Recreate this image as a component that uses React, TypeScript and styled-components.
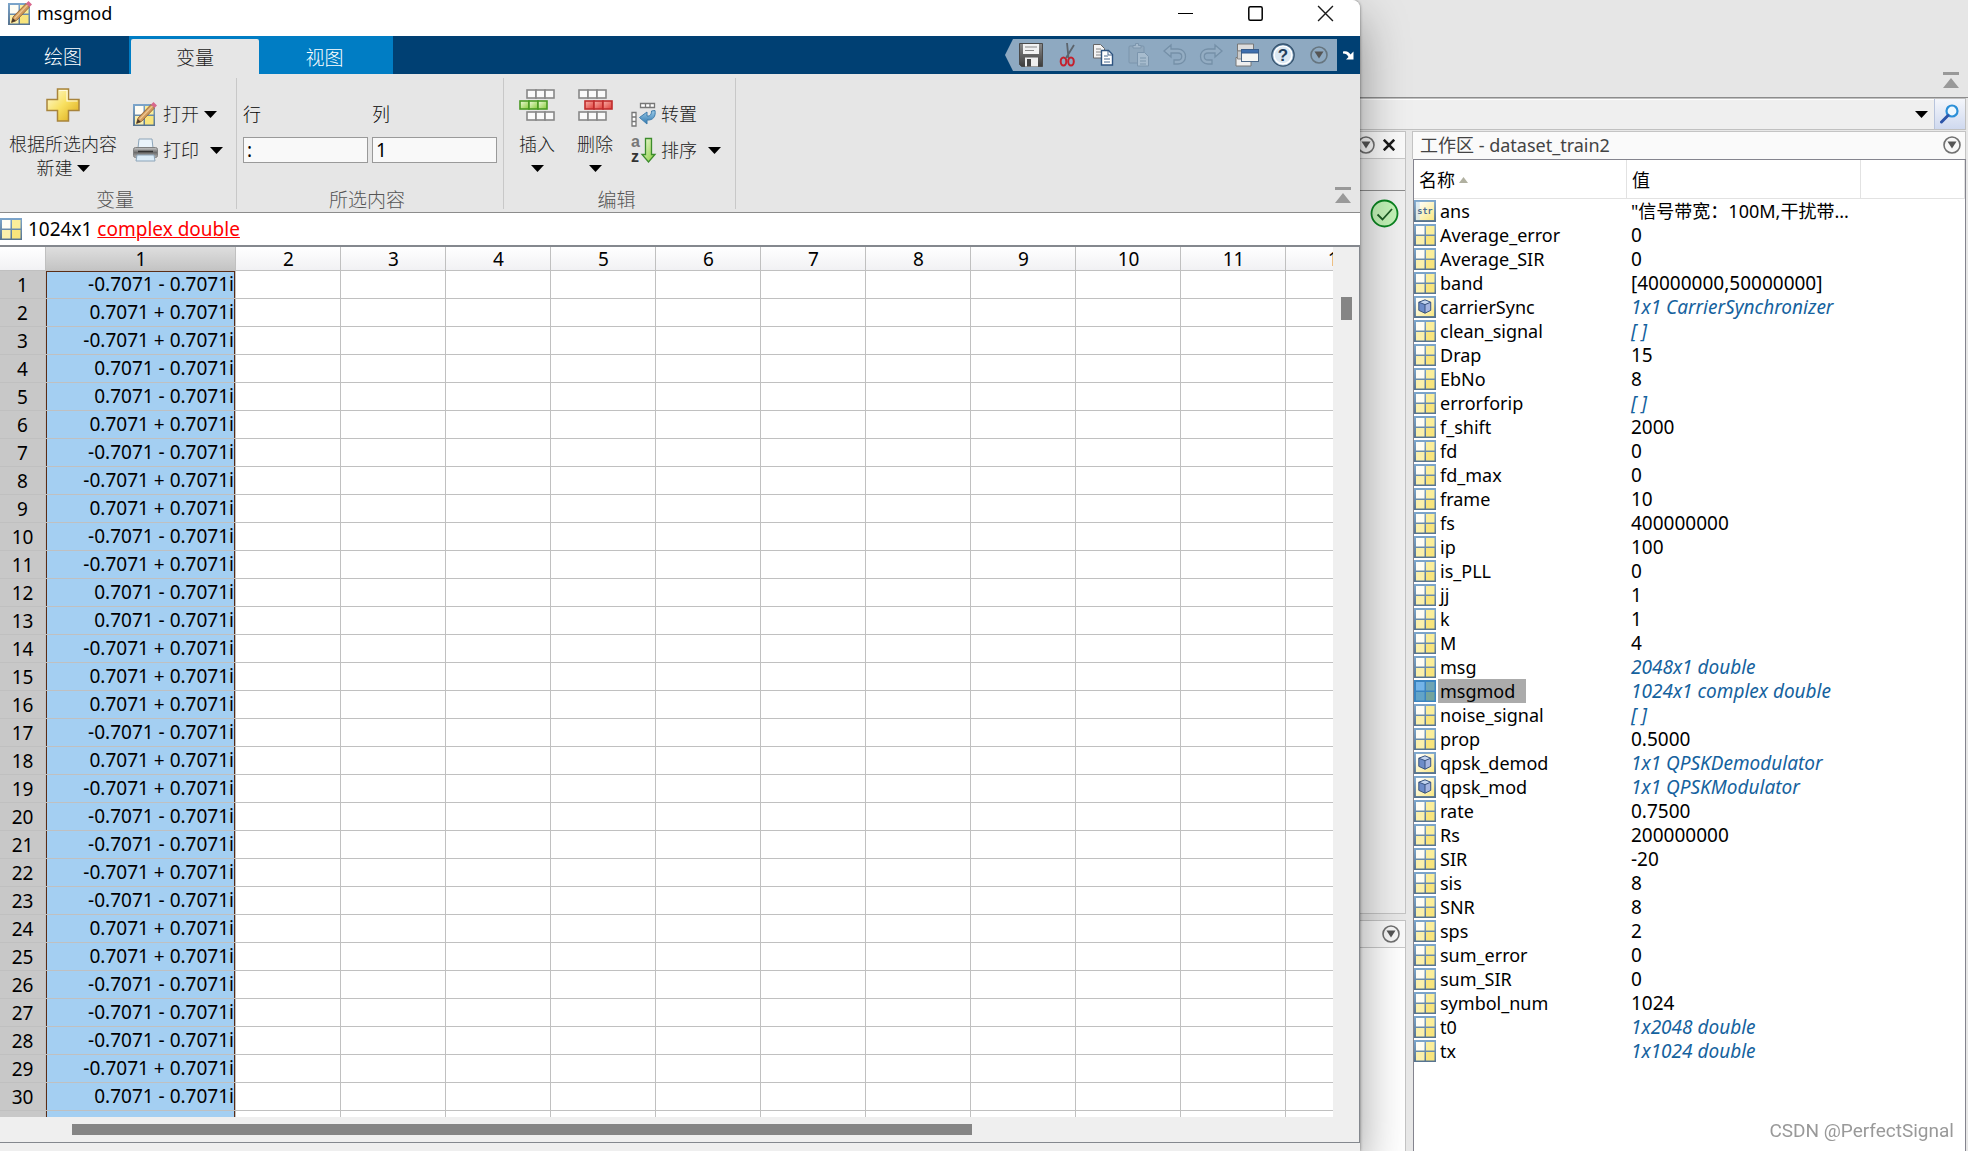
import React from "react";
import styled, { createGlobalStyle, css } from "styled-components";

const GlobalStyle = createGlobalStyle`
  * { box-sizing: border-box; }
  body {
    margin: 0;
    background: #e8e8e8;
    color: #000;
    font-family: "Noto Sans", "Noto Sans CJK SC", sans-serif;
    font-size: 19px;
    line-height: 24px;
  }
  button, input { font: inherit; color: inherit; }
  button { border: 0; padding: 0; margin: 0; background: none; }
  svg { display: block; flex: none; }
`;

const Desktop = styled.main`
  display: flex;
  height: 100vh;
  overflow: hidden;
`;

/* ---------- Variable editor window ---------- */

const EditorWindow = styled.section`
  display: flex;
  flex-direction: column;
  flex: 1;
  min-width: 0;
  z-index: 1;
  background: #efefef;
  border-radius: 0 8px 0 0;
  box-shadow: 0 0 3px rgba(0, 0, 0, 0.5), 0 20px 48px rgba(0, 0, 0, 0.4);
`;

const TitleBar = styled.header`
  display: flex;
  align-items: center;
  height: 36px;
  padding: 0 0 10px 8px;
  gap: 4px;
  background: #fff;
  border-radius: 0 8px 0 0;
`;

const WindowTitle = styled.h1`
  flex: 1;
  margin: 0;
  font-size: 18px;
  font-weight: 400;
`;

const WindowButtons = styled.div`
  display: flex;
`;

const WindowButton = styled.button`
  display: flex;
  align-items: center;
  justify-content: center;
  width: 70px;
  height: 26px;
`;

const TabStrip = styled.nav`
  display: flex;
  height: 38px;
  background: #004073;
`;

const TabGroup = styled.div`
  display: flex;
  padding: 3px 0 0 2px;
  background: #007dc4;
`;

const Tab = styled.button<{ $active?: boolean; $width: number }>`
  width: ${(p) => p.$width}px;
  padding: 3px 3px 0 0;
  color: #fff;
  font-weight: 300;
  ${(p) =>
    p.$active &&
    css`
      padding-right: 0;
      color: #222;
      background: #e6e6e6;
      border-radius: 2px 2px 0 0;
    `}
`;

const QuickBar = styled.div`
  display: flex;
  margin: 3px 0 3px auto;
  padding-left: 8px;
  background: #8ea9c1;
  clip-path: polygon(0 50%, 8px 0, 100% 0, 100% 100%, 8px 100%);
`;

const QuickButton = styled.button`
  display: flex;
  align-items: center;
  justify-content: center;
  width: 36px;
`;

const UndockButton = styled(QuickButton)`
  width: 23px;
`;

const Ribbon = styled.div`
  display: flex;
  height: 139px;
  padding: 4px 0 3px;
  background: #e6e6e6;
  border-bottom: 1px solid #8c8c8c;
`;

const RibbonSection = styled.section<{ $width: number }>`
  display: flex;
  flex-direction: column;
  width: ${(p) => p.$width}px;
  border-right: 1px solid #c8c8c8;
`;

const SectionBody = styled.div<{ $inset?: number }>`
  display: flex;
  flex: 1;
  padding-left: ${(p) => p.$inset ?? 0}px;
`;

const SectionLabel = styled.h2`
  margin: 0;
  padding-right: 6px;
  font-size: 19px;
  line-height: 18px;
  font-weight: 300;
  text-align: center;
  color: #555;
`;

const BigButton = styled.button<{ $width: number }>`
  display: flex;
  flex-direction: column;
  align-items: center;
  width: ${(p) => p.$width}px;
  padding-top: 10px;
  color: #222;
  font-size: 18px;
  font-weight: 300;
`;

const BigIcon = styled.span`
  display: block;
  height: 44px;
`;

const ButtonLine = styled.span`
  display: flex;
  align-items: center;
  justify-content: center;
  gap: 4px;
  height: 24px;
  white-space: nowrap;
`;

const SmallStack = styled.div`
  display: flex;
  flex-direction: column;
  padding: 18px 0 0 7px;
`;

const SmallButton = styled.button<{ $gap: number }>`
  display: flex;
  align-items: center;
  height: 36px;
  color: #222;
  font-size: 18px;
  font-weight: 300;
  white-space: nowrap;
  > svg:first-child { margin-right: 5px; }
  > svg:last-child:not(:first-child) { margin-left: ${(p) => p.$gap}px; }
`;

const FieldRow = styled.div`
  display: grid;
  grid-template-columns: 125px 125px;
  gap: 4px;
  padding-top: 24px;
`;

const Field = styled.label`
  display: flex;
  flex-direction: column;
  gap: 11px;
  font-size: 18px;
  font-weight: 300;
`;

const FieldInput = styled.input`
  width: 100%;
  height: 26px;
  padding: 0 3px;
  border: 1px solid #9a9a9a;
  background: #f9f9f9;
  font-size: 19px;
  font-weight: 400;
  outline: 0;
`;

const CollapseButton = styled.button`
  align-self: flex-end;
  margin-left: auto;
  padding: 0 9px 6px;
`;

const InfoBar = styled.div`
  display: flex;
  align-items: center;
  gap: 6px;
  height: 32px;
  background: #fff;
`;

const TypeLink = styled.a`
  color: #f00;
  text-decoration: underline;
  text-decoration-thickness: 1px;
`;

const GridFrame = styled.div`
  display: grid;
  grid-template-columns: minmax(0, 1fr) 26px;
  grid-template-rows: minmax(0, 1fr) 25px;
  flex: 1;
  min-height: 0;
  margin-bottom: 8px;
  border: solid #84888e;
  border-width: 2px 1px 1px 0;
`;

const GridViewport = styled.div`
  overflow: hidden;
`;

const VerticalTrack = styled.div`
  padding: 50px 0 0 8px;
`;

const VerticalThumb = styled.div`
  width: 11px;
  height: 23px;
  background: #858585;
`;

const HorizontalTrack = styled.div`
  display: grid;
  grid-column: 1 / -1;
  grid-template-columns: 900fr 387fr;
  padding: 7px 0 0 72px;
`;

const HorizontalThumb = styled.div`
  height: 11px;
  background: #858585;
`;

const DataGrid = styled.table`
  width: 1391px;
  table-layout: fixed;
  border-collapse: separate;
  border-spacing: 0;
  background: #fff;
  th, td {
    height: 28px;
    padding: 0;
    border: solid #c0c0c0;
    border-width: 0 1px 1px 0;
    font-weight: 400;
    line-height: 22px;
    white-space: pre;
  }
`;

const ColumnHead = styled.th<{ $selected?: boolean }>`
  && { height: 24px; padding-left: 1px; }
  background: ${(p) =>
    p.$selected ? "linear-gradient(#dedede, #c4c4c4)" : "linear-gradient(#fff, #f1f1f4)"};
`;

const RowHead = styled.th`
  background: #c8c8c8;
`;

const ValueCell = styled.td<{ $first: boolean }>`
  text-align: right;
  background: #a4cff2;
  box-shadow: inset 1px 0 #5a2d16, inset -1px 0 #5a2d16${(p) => (p.$first ? ", inset 0 1px #5a2d16" : "")};
  && { padding-right: 1px; vertical-align: top; line-height: 27px; }
`;

/* ---------- Main window behind the editor ---------- */

const Backdrop = styled.section`
  display: flex;
  flex-direction: column;
  width: 608px;
  background: #e8e8e8;
`;

const RibbonStub = styled.div`
  display: flex;
  height: 98px;
  padding-bottom: 3px;
  background: #e6e6e6;
  border-bottom: 1px solid #8c8c8c;
`;

const AddressBar = styled.div`
  display: flex;
  justify-content: flex-end;
  height: 32px;
  margin-right: 2px;
  background: #efefef;
  border: solid #c0c0c0;
  border-width: 1px 1px 1px 0;
  box-shadow: inset 0 1px #fff;
`;

const AddressMenu = styled.button`
  padding: 0 6px;
`;

const SearchButton = styled.button`
  display: flex;
  align-items: center;
  justify-content: center;
  width: 31px;
  border-left: 1px solid #b8c4dc;
  background: linear-gradient(#f4f6fb, #cfd9ef);
`;

const Panels = styled.div`
  display: flex;
  gap: 6px;
  flex: 1;
  min-height: 0;
  padding: 1px 2px 0 0;
`;

const SideColumn = styled.div`
  display: flex;
  flex-direction: column;
  gap: 6px;
  width: 46px;
`;

const SidePanel = styled.div<{ $height?: number }>`
  display: flex;
  flex-direction: column;
  ${(p) => (p.$height ? `height: ${p.$height}px;` : "flex: 1;")}
  border: solid #c4c4c4;
  border-width: 1px 1px ${(p) => (p.$height ? 0 : 1)}px 0;
  background: ${(p) => (p.$height ? "#fff" : "#f0f0f0")};
`;

const SideHeader = styled.div<{ $right: number }>`
  display: flex;
  align-items: center;
  justify-content: flex-end;
  gap: 8px;
  height: 27px;
  padding-right: ${(p) => p.$right}px;
  border-bottom: 1px solid #c8c8c8;
  background: #fafafa;
`;

const SideTabs = styled.div`
  height: 32px;
  border-bottom: 1px solid #8c8c8c;
`;

const StatusMark = styled.div`
  align-self: flex-end;
  padding: 8px 6px;
`;

const Workspace = styled.section`
  display: flex;
  flex-direction: column;
  flex: 1;
  min-width: 0;
`;

const WorkspaceHeader = styled.div`
  display: flex;
  align-items: center;
  justify-content: space-between;
  height: 28px;
  padding: 0 4px 2px 7px;
  border: solid #c4c4c4;
  border-width: 1px 1px 0 1px;
  background: #fafafa;
`;

const WorkspaceTitle = styled.h2`
  margin: 0;
  font-size: 18px;
  font-weight: 400;
  color: #444;
`;

const WorkspaceBody = styled.div`
  flex: 1;
  min-height: 0;
  overflow: hidden;
  background: #fff;
  border: solid #84848e;
  border-width: 1px 1px 0 1px;
  margin-left: 1px;
`;

const VariableTable = styled.table`
  width: 100%;
  table-layout: fixed;
  border-collapse: separate;
  border-spacing: 0;
  th {
    height: 39px;
    padding: 2px 5px 0;
    border: solid #e2e2e2;
    border-width: 0 1px 1px 0;
    font-size: 18px;
    font-weight: 400;
    text-align: left;
  }
  td {
    height: 24px;
    padding: 0;
    line-height: 24px;
    white-space: nowrap;
  }
`;

const HeadLabel = styled.span`
  display: flex;
  align-items: center;
  gap: 4px;
`;

const NameCell = styled.div`
  display: flex;
  align-items: center;
  gap: 2px;
  height: 24px;
`;

const VariableName = styled.span<{ $selected?: boolean }>`
  padding: 0 11px 0 2px;
  font-size: 18px;
  background: ${(p) => (p.$selected ? "#ababab" : "none")};
`;

const VariableValue = styled.td<{ $summary?: boolean; $text?: boolean }>`
  && { padding-left: 4px; }
  font-size: ${(p) => (p.$text ? 18 : 19)}px;
  ${(p) =>
    p.$summary &&
    css`
      color: #15629e;
      font-style: italic;
    `}
`;

const Watermark = styled.p`
  position: fixed;
  right: 14px;
  bottom: 8px;
  margin: 0;
  font-family: Roboto, sans-serif;
  font-size: 19px;
  color: #999;
`;

/* ---------- Icons ---------- */

const DefsSheet = styled.svg`
  position: absolute;
`;

const Defs = () => (
  <DefsSheet width="0" height="0" aria-hidden="true">
    <defs>
      <linearGradient id="gold" x1="0" y1="0" x2="1" y2="1">
        <stop offset="0" stopColor="#fffce0" />
        <stop offset="0.5" stopColor="#f8e060" />
        <stop offset="1" stopColor="#d9a514" />
      </linearGradient>
      <linearGradient id="pane" x1="0" y1="0" x2="1" y2="1">
        <stop offset="0.15" stopColor="#fffef8" />
        <stop offset="1" stopColor="#fae678" />
      </linearGradient>
      <linearGradient id="frame" x1="0" y1="0" x2="0" y2="1">
        <stop offset="0" stopColor="#7da6cc" />
        <stop offset="1" stopColor="#56738f" />
      </linearGradient>
      <linearGradient id="green" x1="0" y1="0" x2="1" y2="1">
        <stop offset="0" stopColor="#f0fadc" />
        <stop offset="1" stopColor="#86cc38" />
      </linearGradient>
      <linearGradient id="red" x1="0" y1="0" x2="1" y2="1">
        <stop offset="0" stopColor="#f7b0a8" />
        <stop offset="1" stopColor="#e03c38" />
      </linearGradient>
      <linearGradient id="metal" x1="0" y1="0" x2="0" y2="1">
        <stop offset="0" stopColor="#8a8a8a" />
        <stop offset="1" stopColor="#3c3c3c" />
      </linearGradient>
      <linearGradient id="printer" x1="0" y1="0" x2="0" y2="1">
        <stop offset="0" stopColor="#c8c8c8" />
        <stop offset="0.5" stopColor="#6c6c6c" />
        <stop offset="1" stopColor="#b4b4b4" />
      </linearGradient>
      <linearGradient id="help" x1="0" y1="0" x2="0" y2="1">
        <stop offset="0" stopColor="#4c7296" />
        <stop offset="1" stopColor="#b4cce2" />
      </linearGradient>
      <linearGradient id="blue" x1="0" y1="0" x2="0" y2="1">
        <stop offset="0" stopColor="#9ccbe8" />
        <stop offset="1" stopColor="#2f78b0" />
      </linearGradient>
    </defs>
  </DefsSheet>
);

const MatrixArt = ({ selected }: { selected?: boolean }) => (
  <>
    <rect x="0" y="0" width="22" height="22" fill={selected ? "#3a84c0" : "url(#frame)"} />
    <rect x="2" y="2" width="8.5" height="8.5" fill={selected ? "#74b4e8" : "#fffdf4"} />
    <rect x="12" y="2" width="8.5" height="8.5" fill={selected ? "#6ea4b4" : "#fbee9a"} />
    <rect x="2" y="12" width="8.5" height="8.5" fill={selected ? "#62a4c8" : "#fbf0ac"} />
    <rect x="12" y="12" width="8.5" height="8.5" fill={selected ? "#74a49c" : "#f8e47c"} />
  </>
);

const MatrixIcon = ({ selected }: { selected?: boolean }) => (
  <svg width="22" height="22" viewBox="0 0 22 22"><MatrixArt selected={selected} /></svg>
);

const ObjectIcon = () => (
  <svg width="22" height="22" viewBox="0 0 23 23">
    <rect x="1" y="1" width="21" height="21" fill="url(#pane)" stroke="url(#frame)" strokeWidth="2" />
    <path d="M5 6.5 11.5 4l6 2.5V15l-6 3-6.5-3z" fill="#6d8cc8" />
    <path d="M5 6.5 11.5 4l6 2.5-6 2.5z" fill="#c4d6f0" />
    <path d="M11.5 9l6-2.5V15l-6 3z" fill="#a3b4e0" />
    <path d="M5 6.5 11.5 4l6 2.5V15l-6 3-6.5-3zM11.5 9v9M5 6.5 11.5 9l6-2.5" fill="none" stroke="#35517c" />
  </svg>
);

const StringIcon = () => (
  <svg width="22" height="22" viewBox="0 0 23 23">
    <rect x="1" y="1" width="21" height="21" fill="url(#pane)" stroke="url(#frame)" strokeWidth="2" />
    <rect x="2" y="2" width="4" height="19" fill="#cfe2f0" opacity="0.7" />
    <text x="11.5" y="14.5" textAnchor="middle" fontFamily="DejaVu Sans Mono, monospace" fontSize="9" fontWeight="700" fill="#4f6f94">str</text>
  </svg>
);

const PencilMatrixIcon = () => (
  <svg width="25" height="25" viewBox="0 0 25 25">
    <g transform="translate(0 2)"><MatrixArt /></g>
    <path d="M3.5 21.5 5 16 18 2.5l3.5 3.5L8.5 19.5z" fill="#d09a5c" stroke="#8a5a2c" strokeWidth="0.8" />
    <path d="M6.5 17.5 19.5 4" stroke="#f0c890" strokeWidth="1.2" />
    <path d="M3.5 21.5 4.7 17l3.2 3z" fill="#4a3a2c" />
    <path d="M18 2.5 20.5 0 24 3.500 21.500 6z" fill="#d8688c" />
  </svg>
);

const PlusIcon = () => (
  <svg width="34" height="34" viewBox="0 0 34 34">
    <path d="M11.5 1h11v10.5H33v11H22.5V33h-11V22.5H1v-11h10.5z" fill="url(#gold)" stroke="#a8843c" strokeWidth="1.5" />
    <path d="M13 2.5h8V13h10.5" fill="none" stroke="#fffbe0" strokeWidth="1.2" />
  </svg>
);

const PrinterIcon = () => (
  <svg width="25" height="24" viewBox="0 0 25 24">
    <path d="M6 1h13l1 9H5z" fill="#eaf3fa" stroke="#8ca4b8" />
    <rect x="0.5" y="9.5" width="24" height="10" rx="2" fill="url(#printer)" stroke="#808080" />
    <path d="M5 13.5h15" stroke="#333" strokeWidth="1.5" />
    <path d="M4 17h17l1 6H3z" fill="#dcecf8" stroke="#8ca4b8" />
  </svg>
);

const Caret = () => (
  <svg width="13" height="7" viewBox="0 0 13 7"><path d="M0 0h13L6.5 7z" fill="#000" /></svg>
);

const CellStrip = ({ x, y, fill, stroke }: { x: number; y: number; fill: string; stroke: string }) => (
  <g transform={`translate(${x} ${y})`} fill={fill} stroke={stroke} strokeWidth="1.6">
    {[0, 9, 18].map((dx) => <rect key={dx} x={dx + 1} y="1" width="9" height="8" />)}
  </g>
);

const InsertIcon = () => (
  <svg width="37" height="34" viewBox="0 0 37 34">
    <CellStrip x={7} y={1} fill="#fafafa" stroke="#888" />
    <CellStrip x={0} y={12} fill="url(#green)" stroke="#4a9a24" />
    <CellStrip x={7} y={23} fill="#fafafa" stroke="#888" />
  </svg>
);

const DeleteIcon = () => (
  <svg width="37" height="34" viewBox="0 0 37 34">
    <CellStrip x={1} y={1} fill="#fafafa" stroke="#888" />
    <CellStrip x={7} y={12} fill="url(#red)" stroke="#c02c2c" />
    <CellStrip x={1} y={23} fill="#fafafa" stroke="#888" />
  </svg>
);

const TransposeIcon = () => (
  <svg width="25" height="25" viewBox="0 0 25 25">
    <g fill="#fff" stroke="#777" strokeWidth="1.3">
      <path d="M9.5 1.5h14v4h-14zM14.5 1.5v4M19 1.5v4" />
      <path d="M1 10.5h4v13.5H1zM1 15h4M1 19.5h4" />
    </g>
    <path d="M24 8.5c1 6-2 10-8 9.5v4L8.500 15.500 16 10v4c3 .5 4.500-1.500 4.500-5z" fill="url(#blue)" stroke="#3f7cab" />
  </svg>
);

const SortIcon = () => (
  <svg width="25" height="26" viewBox="0 0 25 26" overflow="visible">
    <g fontFamily="Liberation Sans, sans-serif" fontWeight="700" fontSize="16">
      <text x="0" y="10" fill="#777">a</text>
      <text x="0" y="25" fill="#333">z</text>
    </g>
    <path d="M14.5 1.5h6v16h3.500L17.500 25 11 17.500h3.500z" fill="url(#green)" stroke="#3c8c2c" strokeWidth="1.3" />
  </svg>
);

const CollapseIcon = () => (
  <svg width="16" height="16" viewBox="0 0 16 16">
    <path d="M0 0h16v3H0zM8 6l8 10H0z" fill="#999" />
  </svg>
);

const SaveIcon = () => (
  <svg width="24" height="24" viewBox="0 0 24 24">
    <path d="M.5.5h23v23H2.5l-2-2z" fill="url(#metal)" stroke="#4a4a4a" />
    <rect x="4" y="1" width="16" height="10" fill="#f2f2f2" />
    <path d="M6 4h12M6 7.5h9" stroke="#888" />
    <rect x="6" y="14.5" width="13" height="9" fill="#eee" />
    <rect x="8" y="16" width="4" height="7.5" fill="#444" />
  </svg>
);

const CutIcon = () => (
  <svg width="24" height="24" viewBox="0 0 24 24" fill="none">
    <path d="M12 0 13.5 15M19 2l-8 13" stroke="#5c646c" strokeWidth="1.8" />
    <ellipse cx="8.5" cy="18.5" rx="2.8" ry="4" stroke="#c4202c" strokeWidth="2" />
    <ellipse cx="16" cy="18.5" rx="2.8" ry="4" stroke="#c4202c" strokeWidth="2" />
  </svg>
);

const CopyIcon = () => (
  <svg width="24" height="24" viewBox="0 0 24 24">
    <path d="M2.5 1.5h7l4 4V15h-11z" fill="#f4f4f4" stroke="#666" />
    <path d="M5 6h5M5 9h6M5 12h6" stroke="#888" />
    <path d="M10.5 7.5h7l4 4V22h-11z" fill="#fff" stroke="#2f5480" strokeWidth="1.4" />
    <path d="M17 8v4h4M13 13h4M13 16h6M13 19h6" stroke="#4a6a90" fill="none" />
  </svg>
);

const PasteIcon = () => (
  <svg width="24" height="24" viewBox="0 0 24 24" opacity="0.6">
    <rect x="2" y="3" width="15" height="17" rx="1" fill="#92a8bc" stroke="#7089a0" />
    <path d="M6 5V2.5h2.5V.5h3v2H14V5z" fill="#b4c4d4" stroke="#7089a0" />
    <path d="M10.5 9.5h7l4 4V23h-11z" fill="#b8c9d8" stroke="#7089a0" />
    <path d="M13 15h6M13 18h6M13 21h6" stroke="#7089a0" />
  </svg>
);

const UndoIcon = ({ flip }: { flip?: boolean }) => (
  <svg width="24" height="24" viewBox="0 0 24 24">
    <path
      transform={flip ? "matrix(-1 0 0 1 24 0)" : undefined}
      d="M1 8 8 2v4h7c10 0 10 15 0 15h-4v-4h4c5 0 5-7 0-7H8v4z"
      fill="#94adc3" stroke="#7590a8" strokeWidth="1.3"
    />
  </svg>
);

const WindowsIcon = () => (
  <svg width="24" height="24" viewBox="0 0 24 24">
    <path d="M2.5 1h16v7h-16z" fill="#ddd" stroke="#777" />
    <path d="M1 14.5h15V23H1z" fill="#eee" stroke="#777" />
    <path d="M2.5 8h4v8h-4z" fill="#ccc" stroke="#888" />
    <rect x="6.5" y="6.5" width="17" height="12" fill="#f6f6f4" stroke="#4c6888" />
    <rect x="6.5" y="6.5" width="17" height="3.5" fill="#3f6fae" stroke="#365c8c" />
  </svg>
);

const HelpIcon = () => (
  <svg width="24" height="24" viewBox="0 0 24 24">
    <circle cx="12" cy="12" r="11.2" fill="url(#help)" stroke="#35526c" strokeWidth="1.2" />
    <circle cx="12" cy="12" r="9" fill="#dce8f2" stroke="#fff" strokeWidth="1.6" />
    <text x="12" y="18" textAnchor="middle" fontFamily="Liberation Sans, sans-serif" fontSize="17" fontWeight="700" fill="#24405c">?</text>
  </svg>
);

const CircleCaret = ({ dim }: { dim?: boolean }) => (
  <svg width="18" height="18" viewBox="0 0 18 18">
    <circle cx="9" cy="9" r="8" fill={dim ? "none" : "#f8f8f8"} stroke={dim ? "#66757f" : "#707070"} strokeWidth="1.6" />
    <path d="M4.5 5.5h9L9 12.500z" fill="#555" />
  </svg>
);

const UndockIcon = () => (
  <svg width="12" height="10" viewBox="0 0 12 10">
    <path d="M0 1.5c4-1 6 .5 7.500 3L10.500 1.500V9.500H3l2.500-2.500C4.500 4.500 2.500 3.500 0 3.500z" fill="#fff" />
  </svg>
);

const SearchIcon = () => (
  <svg width="20" height="20" viewBox="0 0 20 20" fill="none">
    <circle cx="12" cy="7" r="5.5" fill="#eef8ff" stroke="#2b8fd8" strokeWidth="2.2" />
    <path d="M8 11.5 1.500 18" stroke="#2c54a8" strokeWidth="3" strokeLinecap="round" />
  </svg>
);

const CrossIcon = ({ size, weight }: { size: number; weight: number }) => (
  <svg width={size} height={size} viewBox="0 0 16 16">
    <path d="M1 1l14 14M15 1 1 15" stroke="#1a1a1a" strokeWidth={weight} />
  </svg>
);

/* ---------- Data ---------- */

const signs =
  "-- ++ -+ +- +- ++ -- -+ ++ -- -+ +- +- -+ ++ ++ -- ++ -+ -- -- -+ -- ++ ++ -- -- -- -+ +-".split(" ");

const samples = signs.map(([re, im]) => `${re === "-" ? "-" : ""}0.7071 ${im} 0.7071i`);

const emptyColumns = Array.from({ length: 11 }, (_, i) => i + 2);

type Kind = "matrix" | "object" | "string";
type Variable = { name: string; value: string; kind?: Kind; summary?: boolean };

const variables: Variable[] = [
  { name: "ans", value: "\"信号带宽：100M,干扰带...", kind: "string" },
  { name: "Average_error", value: "0" },
  { name: "Average_SIR", value: "0" },
  { name: "band", value: "[40000000,50000000]" },
  { name: "carrierSync", value: "1x1 CarrierSynchronizer", kind: "object", summary: true },
  { name: "clean_signal", value: "[ ]", summary: true },
  { name: "Drap", value: "15" },
  { name: "EbNo", value: "8" },
  { name: "errorforip", value: "[ ]", summary: true },
  { name: "f_shift", value: "2000" },
  { name: "fd", value: "0" },
  { name: "fd_max", value: "0" },
  { name: "frame", value: "10" },
  { name: "fs", value: "400000000" },
  { name: "ip", value: "100" },
  { name: "is_PLL", value: "0" },
  { name: "jj", value: "1" },
  { name: "k", value: "1" },
  { name: "M", value: "4" },
  { name: "msg", value: "2048x1 double", summary: true },
  { name: "msgmod", value: "1024x1 complex double", summary: true },
  { name: "noise_signal", value: "[ ]", summary: true },
  { name: "prop", value: "0.5000" },
  { name: "qpsk_demod", value: "1x1 QPSKDemodulator", kind: "object", summary: true },
  { name: "qpsk_mod", value: "1x1 QPSKModulator", kind: "object", summary: true },
  { name: "rate", value: "0.7500" },
  { name: "Rs", value: "200000000" },
  { name: "SIR", value: "-20" },
  { name: "sis", value: "8" },
  { name: "SNR", value: "8" },
  { name: "sps", value: "2" },
  { name: "sum_error", value: "0" },
  { name: "sum_SIR", value: "0" },
  { name: "symbol_num", value: "1024" },
  { name: "t0", value: "1x2048 double", summary: true },
  { name: "tx", value: "1x1024 double", summary: true },
];

const selectedVariable = "msgmod";

const VariableIcon = ({ kind, selected }: { kind?: Kind; selected: boolean }) => {
  if (kind === "string") return <StringIcon />;
  if (kind === "object") return <ObjectIcon />;
  return <MatrixIcon selected={selected} />;
};

/* ---------- Views ---------- */

const VariableEditor = () => (
  <EditorWindow>
    <TitleBar>
      <PencilMatrixIcon />
      <WindowTitle>msgmod</WindowTitle>
      <WindowButtons>
        <WindowButton aria-label="Minimize">
          <svg width="15" height="15" viewBox="0 0 15 15"><path d="M0 7.5h15" stroke="#000" /></svg>
        </WindowButton>
        <WindowButton aria-label="Maximize">
          <svg width="15" height="15" viewBox="0 0 15 15">
            <rect x="0.8" y="0.8" width="13.4" height="13.4" rx="1.5" fill="none" stroke="#000" strokeWidth="1.5" />
          </svg>
        </WindowButton>
        <WindowButton aria-label="Close"><CrossIcon size={17} weight={1.3} /></WindowButton>
      </WindowButtons>
    </TitleBar>

    <TabStrip>
      <Tab $width={129}>绘图</Tab>
      <TabGroup>
        <Tab $width={128} $active>变量</Tab>
        <Tab $width={134}>视图</Tab>
      </TabGroup>
      <QuickBar>
        <QuickButton aria-label="Save"><SaveIcon /></QuickButton>
        <QuickButton aria-label="Cut"><CutIcon /></QuickButton>
        <QuickButton aria-label="Copy"><CopyIcon /></QuickButton>
        <QuickButton aria-label="Paste"><PasteIcon /></QuickButton>
        <QuickButton aria-label="Undo"><UndoIcon /></QuickButton>
        <QuickButton aria-label="Redo"><UndoIcon flip /></QuickButton>
        <QuickButton aria-label="Switch windows"><WindowsIcon /></QuickButton>
        <QuickButton aria-label="Help"><HelpIcon /></QuickButton>
        <QuickButton aria-label="More"><CircleCaret dim /></QuickButton>
      </QuickBar>
      <UndockButton aria-label="Dock"><UndockIcon /></UndockButton>
    </TabStrip>

    <Ribbon>
      <RibbonSection $width={237}>
        <SectionBody>
          <BigButton $width={126}>
            <BigIcon><PlusIcon /></BigIcon>
            <ButtonLine>根据所选内容</ButtonLine>
            <ButtonLine>新建<Caret /></ButtonLine>
          </BigButton>
          <SmallStack>
            <SmallButton $gap={5}><PencilMatrixIcon />打开<Caret /></SmallButton>
            <SmallButton $gap={11}><PrinterIcon />打印<Caret /></SmallButton>
          </SmallStack>
        </SectionBody>
        <SectionLabel>变量</SectionLabel>
      </RibbonSection>

      <RibbonSection $width={267}>
        <SectionBody $inset={6}>
          <FieldRow>
            <Field>行<FieldInput defaultValue=":" /></Field>
            <Field>列<FieldInput defaultValue="1" /></Field>
          </FieldRow>
        </SectionBody>
        <SectionLabel>所选内容</SectionLabel>
      </RibbonSection>

      <RibbonSection $width={232}>
        <SectionBody $inset={4}>
          <BigButton $width={58}>
            <BigIcon><InsertIcon /></BigIcon>
            <ButtonLine>插入</ButtonLine>
            <ButtonLine><Caret /></ButtonLine>
          </BigButton>
          <BigButton $width={58}>
            <BigIcon><DeleteIcon /></BigIcon>
            <ButtonLine>删除</ButtonLine>
            <ButtonLine><Caret /></ButtonLine>
          </BigButton>
          <SmallStack>
            <SmallButton $gap={0}><TransposeIcon />转置</SmallButton>
            <SmallButton $gap={11}><SortIcon />排序<Caret /></SmallButton>
          </SmallStack>
        </SectionBody>
        <SectionLabel>编辑</SectionLabel>
      </RibbonSection>
      <CollapseButton aria-label="Collapse toolstrip"><CollapseIcon /></CollapseButton>
    </Ribbon>

    <InfoBar>
      <MatrixIcon />
      <span>1024x1 <TypeLink href="#complex">complex double</TypeLink></span>
    </InfoBar>

    <GridFrame>
      <GridViewport>
        <DataGrid>
          <colgroup>
            <col width={46} />
            <col width={190} />
            {emptyColumns.map((c) => <col key={c} width={105} />)}
          </colgroup>
          <thead>
            <tr>
              <ColumnHead />
              <ColumnHead $selected>1</ColumnHead>
              {emptyColumns.map((c) => <ColumnHead key={c}>{c}</ColumnHead>)}
            </tr>
          </thead>
          <tbody>
            {[...samples, ""].map((sample, row) => (
              <tr key={row}>
                <RowHead>{sample && row + 1}</RowHead>
                <ValueCell $first={row === 0}>{sample}</ValueCell>
                {emptyColumns.map((c) => <td key={c} />)}
              </tr>
            ))}
          </tbody>
        </DataGrid>
      </GridViewport>
      <VerticalTrack><VerticalThumb /></VerticalTrack>
      <HorizontalTrack><HorizontalThumb /></HorizontalTrack>
    </GridFrame>
  </EditorWindow>
);

const MainWindow = () => (
  <Backdrop>
    <RibbonStub>
      <CollapseButton aria-label="Collapse toolstrip"><CollapseIcon /></CollapseButton>
    </RibbonStub>
    <AddressBar>
      <AddressMenu aria-label="Folder history"><Caret /></AddressMenu>
      <SearchButton aria-label="Search"><SearchIcon /></SearchButton>
    </AddressBar>
    <Panels>
      <SideColumn>
        <SidePanel>
          <SideHeader $right={10}>
            <CircleCaret />
            <CrossIcon size={12} weight={3.5} />
          </SideHeader>
          <SideTabs />
          <StatusMark>
            <svg width="29" height="29" viewBox="0 0 29 29">
              <circle cx="14.5" cy="14.5" r="13" fill="#c4f4b8" stroke="#0a8420" strokeWidth="1.8" />
              <path d="M7.5 15.5 12.5 20.5 22 10" fill="none" stroke="#1c5c24" strokeWidth="1.8" />
            </svg>
          </StatusMark>
        </SidePanel>
        <SidePanel $height={231}>
          <SideHeader $right={5}><CircleCaret /></SideHeader>
        </SidePanel>
      </SideColumn>

      <Workspace>
        <WorkspaceHeader>
          <WorkspaceTitle>工作区 - dataset_train2</WorkspaceTitle>
          <button aria-label="Workspace menu"><CircleCaret /></button>
        </WorkspaceHeader>
        <WorkspaceBody>
          <VariableTable>
            <colgroup>
              <col width={213} />
              <col width={234} />
              <col />
            </colgroup>
            <thead>
              <tr>
                <th>
                  <HeadLabel>
                    名称
                    <svg width="9" height="6" viewBox="0 0 9 6"><path d="M4.5 0 9 6H0z" fill="#b0b0a0" /></svg>
                  </HeadLabel>
                </th>
                <th>值</th>
                <th />
              </tr>
            </thead>
            <tbody>
              {variables.map((v) => (
                <tr key={v.name}>
                  <td>
                    <NameCell>
                      <VariableIcon kind={v.kind} selected={v.name === selectedVariable} />
                      <VariableName $selected={v.name === selectedVariable}>{v.name}</VariableName>
                    </NameCell>
                  </td>
                  <VariableValue $summary={v.summary} $text={v.kind === "string"}>{v.value}</VariableValue>
                  <td />
                </tr>
              ))}
            </tbody>
          </VariableTable>
        </WorkspaceBody>
      </Workspace>
    </Panels>
  </Backdrop>
);

export default function App() {
  return (
    <>
      <GlobalStyle />
      <Defs />
      <Desktop>
        <VariableEditor />
        <MainWindow />
      </Desktop>
      <Watermark>CSDN @PerfectSignal</Watermark>
    </>
  );
}
